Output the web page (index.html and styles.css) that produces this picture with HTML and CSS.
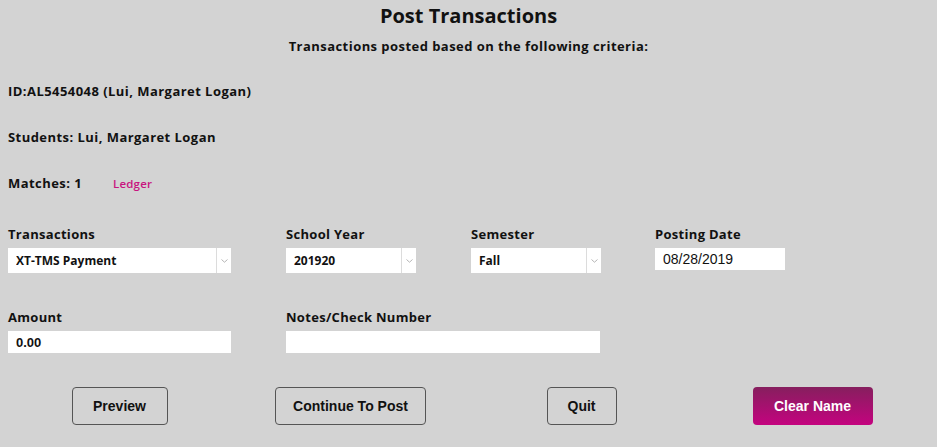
FILE: index.html
```html
<!DOCTYPE html>
<html lang="en">
<head>
  <meta charset="UTF-8" />
  <title>Post Transactions</title>
  <link rel="stylesheet" href="styles.css">
</head>
<body>
  <div class="page">
    <h1>Post Transactions</h1>
    <p class="subtitle">Transactions posted based on the following criteria:</p>

    <p class="info">ID:AL5454048 (Lui, Margaret Logan)</p>
    <p class="info">Students: Lui, Margaret Logan</p>
    <p class="info">Matches: 1 <a href="#" class="ledger">Ledger</a></p>

    <div class="form-grid">
      <div class="field">
        <label>Transactions</label>
        <div class="select wide">
          <select><option>XT-TMS Payment</option></select>
          <span class="arrow"><svg width="7" height="4" viewBox="0 0 7 4"><path d="M0.5 0.5 L3.5 3.2 L6.5 0.5" fill="none" stroke="#b5b5b5" stroke-width="1"/></svg></span>
        </div>
      </div>
      <div class="field">
        <label>School Year</label>
        <div class="select">
          <select><option>201920</option></select>
          <span class="arrow"><svg width="7" height="4" viewBox="0 0 7 4"><path d="M0.5 0.5 L3.5 3.2 L6.5 0.5" fill="none" stroke="#b5b5b5" stroke-width="1"/></svg></span>
        </div>
      </div>
      <div class="field">
        <label>Semester</label>
        <div class="select">
          <select><option>Fall</option></select>
          <span class="arrow"><svg width="7" height="4" viewBox="0 0 7 4"><path d="M0.5 0.5 L3.5 3.2 L6.5 0.5" fill="none" stroke="#b5b5b5" stroke-width="1"/></svg></span>
        </div>
      </div>
      <div class="field">
        <label>Posting Date</label>
        <input type="text" class="date" value="08/28/2019">
      </div>

      <div class="field row2">
        <label>Amount</label>
        <input type="text" class="amount" value="0.00">
      </div>
      <div class="field row2 notes">
        <label>Notes/Check Number</label>
        <input type="text" class="notes-input" value="">
      </div>
    </div>

    <div class="actions">
      <button class="btn preview">Preview</button>
      <button class="btn post">Continue To Post</button>
      <button class="btn quit">Quit</button>
      <button class="btn clear">Clear Name</button>
    </div>
  </div>
</body>
</html>
```

FILE: styles.css
```css
body {
  background-color: #d3d3d3;
  font-family: 'Open Sans', sans-serif;
  color: #111;
  margin: 0;
  padding: 4px 8px;
}
h1 {
  margin: 0;
  text-align: center;
  font-size: 20px;
  line-height: 24px;
  font-weight: bold;
}
.subtitle {
  margin: 9px 0 0;
  text-align: center;
  font-size: 13px;
  line-height: 18px;
  font-weight: bold;
  letter-spacing: 0.45px;
}
.info {
  margin: 28px 0 0;
  font-size: 13px;
  line-height: 18px;
  font-weight: bold;
  letter-spacing: 0.45px;
}
.subtitle + .info {
  margin-top: 27px;
}
.ledger {
  color: #c8147f;
  text-decoration: none;
  font-size: 11.5px;
  font-weight: 600;
  letter-spacing: 0.2px;
  margin-left: 27px;
}
.form-grid {
  margin-top: 32px;
  display: grid;
  grid-template-columns: 278px 185px 184px 1fr;
  row-gap: 35px;
}
.field label {
  display: block;
  font-size: 13px;
  line-height: 18px;
  font-weight: bold;
  letter-spacing: 0.3px;
  margin-bottom: 5px;
}
.row2 {
  grid-row: 2;
}
.notes {
  grid-column: 2 / 4;
}
.select {
  display: flex;
  width: 130px;
  height: 25px;
  background-color: #fff;
}
.select.wide {
  width: 223px;
}
.select select {
  flex: 1;
  min-width: 0;
  appearance: none;
  border: none;
  background: transparent;
  font-family: 'Open Sans', sans-serif;
  font-size: 12px;
  font-weight: bold;
  color: #111;
  padding: 0 0 0 8px;
  outline: none;
}
.select .arrow {
  width: 14px;
  border-left: 1px solid #dcdcdc;
  display: flex;
  align-items: center;
  justify-content: center;
}
input {
  display: block;
  box-sizing: border-box;
  height: 22px;
  border: none;
  background-color: #fff;
  font-family: 'Liberation Sans', Arial, sans-serif;
  color: #111;
  outline: none;
  padding: 0 8px;
}
.date {
  width: 130px;
  font-size: 14px;
}
.amount {
  width: 223px;
  font-size: 13px;
  font-weight: bold;
}
.notes-input {
  width: 314px;
}
.actions {
  margin: 34px 0 0 -4px;
  display: grid;
  grid-template-columns: repeat(4, 231px);
  justify-items: center;
}
.btn {
  height: 38px;
  padding: 0;
  border: 1px solid #555;
  border-radius: 4px;
  background: transparent;
  font-family: 'Liberation Sans', Arial, sans-serif;
  font-size: 14px;
  font-weight: bold;
  color: #111;
  white-space: nowrap;
  cursor: pointer;
}
.btn.preview {
  width: 96px;
}
.btn.post {
  width: 151px;
}
.btn.quit {
  width: 70px;
}
.btn.clear {
  width: 120px;
  border: none;
  background: linear-gradient(#861f5e, #c4037f);
  color: #fff;
}
```
